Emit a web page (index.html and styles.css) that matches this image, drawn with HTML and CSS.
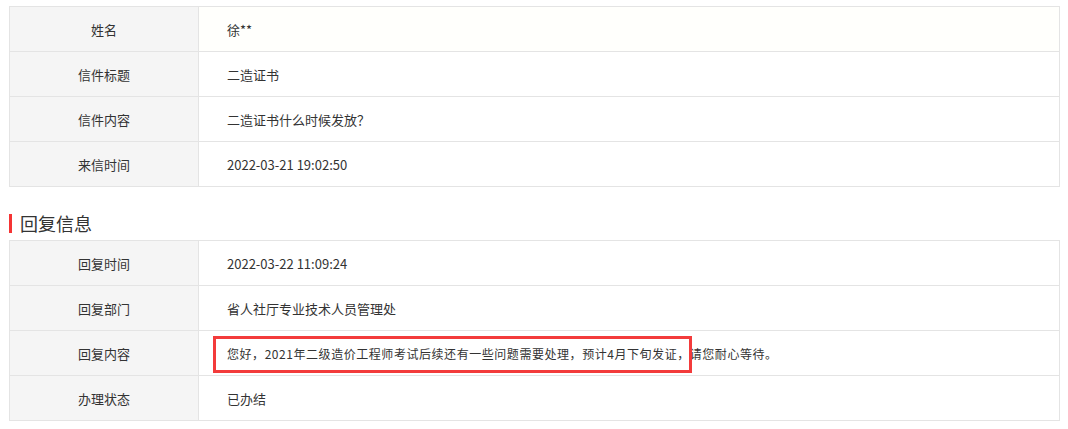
FILE: index.html
```html
<!DOCTYPE html>
<html lang="zh-CN">
<head>
    <meta charset="UTF-8">
    <meta name="viewport" content="width=device-width, initial-scale=1.0">
    <title>信件详情</title>
    <link rel="stylesheet" href="styles.css">
</head>
<body>
    <div class="container">
        <table class="info-table">
            <tr class="first">
                <td class="label">姓名</td>
                <td class="value">徐**</td>
            </tr>
            <tr>
                <td class="label">信件标题</td>
                <td class="value">二造证书</td>
            </tr>
            <tr>
                <td class="label">信件内容</td>
                <td class="value">二造证书什么时候发放？</td>
            </tr>
            <tr>
                <td class="label">来信时间</td>
                <td class="value">2022-03-21 19:02:50</td>
            </tr>
        </table>

        <h3 class="section-title">回复信息</h3>

        <table class="info-table">
            <tr>
                <td class="label">回复时间</td>
                <td class="value">2022-03-22 11:09:24</td>
            </tr>
            <tr>
                <td class="label">回复部门</td>
                <td class="value">省人社厅专业技术人员管理处</td>
            </tr>
            <tr>
                <td class="label">回复内容</td>
                <td class="value"><span class="mark-wrap"><span class="mark"></span>您好，2021年二级造价工程师考试后续还有一些问题需要处理，预计4月下旬发证，请您耐心等待。</span></td>
            </tr>
            <tr>
                <td class="label">办理状态</td>
                <td class="value">已办结</td>
            </tr>
        </table>
    </div>
</body>
</html>
```

FILE: styles.css
```css
body {
  margin: 0;
  padding: 0;
  background-color: #fff;
  font-family: "Microsoft YaHei", "Noto Sans CJK SC", "Liberation Sans", sans-serif;
  color: #333;
}
.container {
  padding: 6px 8px 0 9px;
}
.info-table {
  width: 100%;
  border-collapse: collapse;
  font-size: 13px;
}
.info-table td {
  border: 1px solid #e4e4e4;
  height: 44px;
  padding: 0;
  vertical-align: middle;
}
.info-table .label {
  width: 188px;
  text-align: center;
  background-color: #f5f5f5;
}
.info-table .value {
  padding-left: 28px;
}
.info-table .first .value {
  background-color: #fffffc;
}
.section-title {
  margin: 27px 0 7px 0;
  padding-left: 8px;
  border-left: 3px solid #f53434;
  font-size: 18px;
  font-weight: normal;
  line-height: 19px;
}
.mark-wrap {
  position: relative;
  font-size: 12px;
  letter-spacing: 0.55px;
}
.mark {
  position: absolute;
  left: -14px;
  top: -9px;
  width: 473px;
  height: 31px;
  border: 3px solid #f33b3b;
}
```
